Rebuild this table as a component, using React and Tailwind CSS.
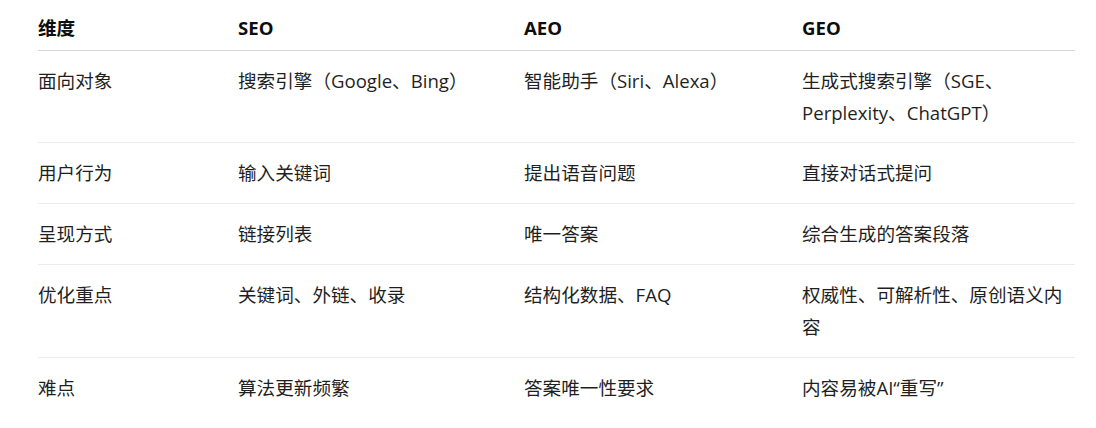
const HEAD = ["维度", "SEO", "AEO", "GEO"];

const ROWS = [
  ["面向对象", "搜索引擎（Google、Bing）", "智能助手（Siri、Alexa）", "生成式搜索引擎（SGE、Perplexity、ChatGPT）"],
  ["用户行为", "输入关键词", "提出语音问题", "直接对话式提问"],
  ["呈现方式", "链接列表", "唯一答案", "综合生成的答案段落"],
  ["优化重点", "关键词、外链、收录", "结构化数据、FAQ", "权威性、可解析性、原创语义内容"],
  ["难点", "算法更新频繁", "答案唯一性要求", "内容易被AI“重写”"],
];

const COLS = "grid grid-cols-[200px_286px_278px_1fr]";

export default function App() {
  return (
    <div
      className="w-[1096px] h-[428px] bg-white pl-[38px] pr-[21px] overflow-hidden text-[18.6px] leading-[31.8px] text-[#1f1f1f]"
      style={{ fontFamily: '"Open Sans", "Noto Sans CJK SC", sans-serif' }}
    >
      <div className={`${COLS} pt-[12px] pb-[6px] border-b border-[#d6d6d6] font-bold text-[#0d0d0d]`}>
        {HEAD.map((h) => (
          <div key={h} className="pr-3">{h}</div>
        ))}
      </div>
      {ROWS.map((row, i) => (
        <div
          key={row[0]}
          className={`${COLS} py-[14px] ${i < ROWS.length - 1 ? "border-b border-[#ececec]" : ""}`}
        >
          {row.map((cell, j) => (
            <div key={j} className="pr-3">{cell}</div>
          ))}
        </div>
      ))}
    </div>
  );
}
